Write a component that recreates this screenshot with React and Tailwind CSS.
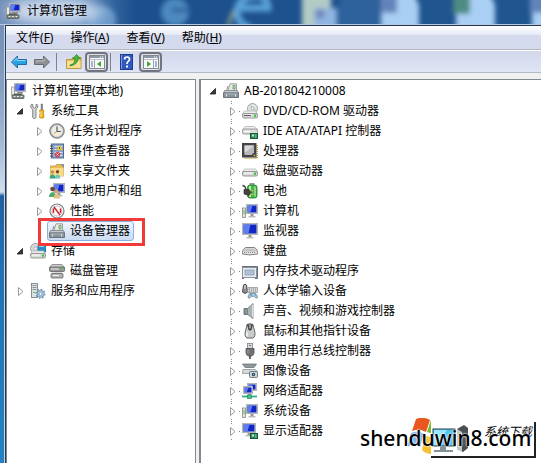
import React from "react";

function Svg({ children, className = "h-4 w-4" }) {
  return (
    <svg viewBox="0 0 16 16" className={`${className} shrink-0`} aria-hidden="true">
      {children}
    </svg>
  );
}

/* A monitor with a blue glossy screen, shared by several icons */
function Screen({ x = 3, y = 0, w = 12, h = 9, stand = true }) {
  return (
    <g>
      {stand && (
        <>
          <rect x={x + w / 2 - 1.5} y={y + h} width="3" height="2" fill="#9a9a96" />
          <rect x={x + w / 2 - 3.5} y={y + h + 2} width="7" height="1.4" fill="#b9b9b4" />
        </>
      )}
      <rect x={x + 0.5} y={y + 0.5} width={w - 1} height={h - 1} fill="#d5d7d4" stroke="#b3b6b4" />
      <rect x={x + 1.5} y={y + 1.5} width={w - 3} height={h - 3} fill="#1226c5" />
      <path d={`M${x + 1.5} ${y + 1.5}h${w / 2 - 1}l-2 ${h - 3}h-${w / 2 - 3}z`} fill="#5d7ff0" />
    </g>
  );
}

function Drive({ y = 8, light = true }) {
  return (
    <g>
      <path d={`M2.5 ${y}h11l2 3h-15z`} fill="#ededed" stroke="#b9b9b9" strokeWidth="0.8" />
      <rect x="0.5" y={y + 2.5} width="15" height="4.5" rx="1.5" fill="#dadada" stroke="#8c8c8c" strokeWidth="0.9" />
      <path d={`M2 ${y + 4}h8`} stroke="#fff" />
      {light && <rect x="12" y={y + 3.6} width="2" height="2.2" fill="#35c22d" />}
    </g>
  );
}

function Board() {
  return (
    <g>
      <rect x="8.5" y="10.5" width="7" height="5" fill="#2c8a5c" stroke="#155a3b" />
      <rect x="10" y="11.5" width="2" height="2" fill="#c8efd5" />
      <path d="M13 12h1.5M13 14h1.5" stroke="#8bd7a6" />
    </g>
  );
}

const icons = {
  management: (
    <Svg>
      <Screen x={3} y={0} w={12} h={9} stand={false} />
      <rect x="0.5" y="4" width="3" height="8" fill="#e9eae4" stroke="#8b8d88" strokeWidth="0.7" />
      <rect x="6" y="9" width="6" height="1.5" fill="#8e8f8b" />
      <path d="M3 10.5h8v1.5h-8z" fill="#5c5d5a" />
      <rect x="1" y="12" width="12" height="3.5" rx="0.5" fill="#7d8580" stroke="#565e59" strokeWidth="0.8" />
      <path d="M2.5 13.5h2M6 13.5h2M9.5 13.5h2" stroke="#e7e9e4" />
    </Svg>
  ),
  tools: (
    <Svg>
      <path d="M1.200 1.500c-1 1.700-.5 3.800 1.500 4.800v7.900c0 1.800 3.300 1.800 3.300 0V6.300c2-1 2.300-3.200 1.200-4.800h-1.200v2.500l-1.500 1l-1.700-1V1.500z" fill="#d3d5d5" stroke="#777a7b" strokeWidth="0.9" />
      <path d="M11.200 1h1.200v6h-1.200z" fill="#8d8f91" stroke="#595c5e" strokeWidth="0.6" />
      <path d="M9.500 7.500q2.200-1.400 4.500 0l-.7 2.200l.7 4.800q-2.200 1.600-4.500 0l.7-4.800z" fill="#f5b51c" stroke="#b77b08" strokeWidth="0.7" />
      <path d="M11 8.500v5.500" stroke="#ffe58a" />
    </Svg>
  ),
  clock: (
    <Svg>
      <circle cx="8" cy="8" r="7.300" fill="#9d9fa3" stroke="#707378" strokeWidth="0.800" />
      <circle cx="8" cy="8" r="5.700" fill="#f3edda" stroke="#d4d6db" />
      <path d="M8 3.500V8.500H12" fill="none" stroke="#3d5a87" strokeWidth="1.200" />
      <path d="M8 8.500l-3 2" stroke="#c89d52" />
    </Svg>
  ),
  events: (
    <Svg>
      <rect x="2.500" y="1" width="12" height="14" fill="#8aa3cc" stroke="#4e6894" />
      <path d="M5.500 3.500h8M5.500 6.500h8M5.500 9.500h8M5.500 12.500h8" stroke="#d5e0f3" />
      <path d="M1 3h3M1 5.500h3M1 8h3M1 10.500h3M1 13h3" stroke="#4d5056" />
      <path d="M10.500 2l3 5H7.500z" fill="#ffd93b" stroke="#c89f18" strokeWidth="0.500" />
      <path d="M10.500 4v2" stroke="#333" strokeWidth="0.800" />
      <circle cx="8.500" cy="11.500" r="2.600" fill="#d63c3c" />
      <path d="M7.500 10.500l2 2m0-2l-2 2" stroke="#fff" strokeWidth="0.800" />
    </Svg>
  ),
  shared: (
    <Svg>
      <path d="M1.500 3h5l1-1.500h7V13h-13z" fill="#e8bd55" stroke="#c29a40" strokeWidth="0.800" />
      <path d="M1.500 5h13v8h-13z" fill="#f8dc8b" />
      <path d="M12 2h2.500v2" stroke="#4b83cc" fill="none" />
      <circle cx="3.500" cy="9" r="1.700" fill="#c98756" />
      <path d="M.5 15.500c0-5.500 6-5.500 6 0z" fill="#37a67c" />
      <circle cx="8.500" cy="8.800" r="1.700" fill="#76462c" />
      <path d="M5.800 15.500c0-5.500 5.500-5.500 5.500 0z" fill="#7cc0b5" />
    </Svg>
  ),
  users: (
    <Svg>
      <Screen x={4} y={0} w={12} h={10} />
      <circle cx="3.500" cy="6" r="2.300" fill="#6f482e" />
      <path d="M0 14c0-6.500 7-6.500 7 0z" fill="#4eaa6c" />
      <circle cx="7.500" cy="8.500" r="2.100" fill="#d9a06b" />
      <path d="M4.500 15.500c0-6 6.500-6 6.500 0z" fill="#e3c083" />
    </Svg>
  ),
  performance: (
    <Svg>
      <circle cx="8" cy="8" r="7" fill="#f7f7f7" stroke="#808184" strokeWidth="1.200" />
      <circle cx="8" cy="8" r="5" fill="#fff" stroke="#b6b6b6" strokeWidth="0.800" />
      <path d="M5 4L11 12M4.500 10V5.500M11.500 10V5.500" stroke="#d81c26" strokeWidth="1.400" fill="none" />
    </Svg>
  ),
  devices: (
    <Svg>
      <path d="M7 .8h6.500V8H4.800z" fill="#e9eae7" stroke="#8a8d8a" strokeWidth="0.800" />
      <path d="M10 2.500h2V6h-2z" fill="#b2dcb0" stroke="#4e9a55" strokeWidth="0.700" />
      <path d="M5 3L3.500 8" stroke="#8a8d8a" />
      <path d="M1.500 7.500h13l1 2.500H.5z" fill="#c4cad0" stroke="#7b8288" strokeWidth="0.800" />
      <path d="M.5 10h15v4.500H.5z" fill="#87919a" stroke="#596067" strokeWidth="0.800" />
      <path d="M1.500 11h13" stroke="#c2cad1" strokeWidth="0.800" />
      <path d="M3.500 11.500v2M12.500 11.500v2" stroke="#e4e8eb" />
    </Svg>
  ),
  storage: (
    <Svg>
      <circle cx="5.500" cy="5.500" r="5" fill="#d8dbdd" stroke="#878b8f" strokeWidth="0.800" />
      <circle cx="5.500" cy="5.500" r="1.500" fill="#fff" stroke="#888" strokeWidth="0.600" />
      <path d="M8 2.500h8V9H8z" fill="#2790cb" stroke="#156896" strokeWidth="0.800" />
      <path d="M9 3.500h5" stroke="#86d2f4" />
      <Drive y={8} />
    </Svg>
  ),
  disks: (
    <Svg>
      <path d="M3 1.500h10l2.500 3H.5z" fill="#cdcdcd" stroke="#7d7d7d" strokeWidth="0.800" />
      <rect x="0.500" y="4" width="15" height="4.500" rx="1" fill="#989898" stroke="#5f5f5f" strokeWidth="0.800" />
      <path d="M3.500 9h9l1.500 2H2z" fill="#dadada" />
      <rect x="2" y="10.500" width="12" height="4.500" rx="1" fill="#b2b2b2" stroke="#666" strokeWidth="0.800" />
      <path d="M4 12.500h6M2 6h8" stroke="#f0f0f0" />
      <rect x="12" y="5" width="2" height="1.500" fill="#53c94a" />
    </Svg>
  ),
  services: (
    <Svg>
      <rect x="1.500" y="0.500" width="6" height="14" fill="#dde1e3" stroke="#7c8589" strokeWidth="0.900" />
      <path d="M2.500 2.500h4M2.500 4.500h4M2.500 6.500h4" stroke="#8b9498" />
      <path d="M3 9.500h2" stroke="#4fbf4c" />
      <circle cx="10.500" cy="10.800" r="3.500" fill="#a9c5df" stroke="#688eb2" strokeWidth="0.800" />
      <circle cx="10.500" cy="10.800" r="4.400" fill="none" stroke="#688eb2" strokeWidth="1.200" strokeDasharray="1.700 1.700" />
      <circle cx="10.500" cy="10.800" r="1.400" fill="#fff" stroke="#688eb2" strokeWidth="0.600" />
    </Svg>
  ),
  dvd: (
    <Svg>
      <circle cx="10.500" cy="5.500" r="5" fill="#e3e5e6" stroke="#8d9193" strokeWidth="0.800" />
      <path d="M10.500 5.500L8 1.500M10.500 5.500l4 2.500" stroke="#9bd2a8" />
      <circle cx="10.500" cy="5.500" r="1.500" fill="#fff" stroke="#8a8a8a" strokeWidth="0.700" />
      <Drive y={8} />
      <path d="M2 12.500h7" stroke="#5d5d5d" />
    </Svg>
  ),
  ide: (
    <Svg>
      <path d="M3 3.500h9.500l3 3H.5z" fill="#efefef" stroke="#b5b5b5" strokeWidth="0.800" />
      <rect x="0.500" y="6" width="15" height="5" rx="1.500" fill="#dcdcdc" stroke="#8e8e8e" strokeWidth="0.900" />
      <path d="M2 8.500h6" stroke="#fff" />
      <Board />
    </Svg>
  ),
  cpu: (
    <Svg>
      <path d="M15.200 2v13.200H2" fill="none" stroke="#c49a3c" strokeWidth="1.600" strokeDasharray="1 1" />
      <rect x="0" y="0" width="14.500" height="14.500" fill="#454547" />
      <path d="M2.500 2.500h9.500v7l-2.500 2.500h-7z" fill="#b7b9bb" />
      <path d="M2.500 2.500h9.500l-9.500 7.500z" fill="#d6d8d9" />
      <circle cx="12.500" cy="12.500" r="1" fill="#d2a33c" />
    </Svg>
  ),
  drive: (
    <Svg>
      <Drive y={6} />
    </Svg>
  ),
  battery: (
    <Svg>
      <rect x="8" y="0.500" width="4" height="2" fill="#b6b8ba" stroke="#6f7274" strokeWidth="0.600" />
      <rect x="5.500" y="2" width="9.500" height="13" rx="2.500" fill="#3fb844" stroke="#1d6f24" strokeWidth="0.800" />
      <path d="M8 3v11" stroke="#b2efa5" strokeWidth="2" />
      <path d="M13 3.500v10" stroke="#d4f3c8" />
      <path d="M.5 2.500q3 .5 3.500 4" fill="none" stroke="#3e3e3e" strokeWidth="1.300" />
      <path d="M2 6.500l5 0 2.500 2.500-2.500 3.500-5-1.500z" fill="#434341" stroke="#222" strokeWidth="0.600" />
      <path d="M8.500 8l3-.5M8.500 11l3 .5" stroke="#d9b755" strokeWidth="1.200" />
    </Svg>
  ),
  computer: (
    <Svg>
      <Screen x={4} y={1} w={12} h={10} />
      <rect x="0.500" y="5" width="3" height="9.500" fill="#e3e4df" stroke="#858884" strokeWidth="0.800" />
      <path d="M2 7v4" stroke="#49bd40" />
    </Svg>
  ),
  monitor: (
    <Svg>
      <Screen x={0} y={0} w={16} h={12} />
    </Svg>
  ),
  keyboard: (
    <Svg>
      <path d="M3.500 4.500h9q3 1.500 3 5v1.500q-7.500 1.800-15 0V9.500q0-3.500 3-5z" fill="#e4e4e4" stroke="#747474" strokeWidth="0.900" />
      <path d="M3.500 6.200h9.500M2.500 7.800h11M2 9.400h12" stroke="#858585" strokeWidth="1" strokeDasharray="1 1" />
    </Svg>
  ),
  memory: (
    <Svg>
      <path d="M0 3.500h15.500v12H13M0 15.500h2" fill="none" stroke="#5a5e64" strokeWidth="0.900" />
      <rect x="0.500" y="4.500" width="14" height="10" fill="#e4ebf4" stroke="#8791a0" />
      <rect x="3" y="7" width="9" height="5" fill="#b2c1d8" stroke="#8896a8" strokeWidth="0.700" />
    </Svg>
  ),
  hid: (
    <Svg>
      <path d="M1.500 2Q3 .5 4.500 2L5.500 9q-2.500 3-5 0z" fill="#8b8d8f" stroke="#3d3f41" strokeWidth="0.900" />
      <path d="M3 2v4" stroke="#eee" />
      <path d="M6 4.500h9.500v5H5.500z" fill="#d3d5d7" stroke="#8b8e91" strokeWidth="0.700" />
      <path d="M7 6h8M7 8h8" stroke="#85898c" strokeDasharray="1 1" />
      <path d="M7.500 10.500h6q2 2 2 4l-1.500.8-2-2h-2.500l-2 2-1.500-.8q0-2 1.500-4z" fill="#b2cadb" stroke="#577990" strokeWidth="0.700" />
      <path d="M8 12h2M13 12h1" stroke="#1d83b6" />
    </Svg>
  ),
  speaker: (
    <Svg>
      <path d="M2 5.500h3.500v6H2z" fill="#8a9599" stroke="#555e62" strokeWidth="0.800" />
      <path d="M5.500 5.500L11 .5v15l-5.500-4z" fill="#a9b3b6" stroke="#747f83" strokeWidth="0.800" />
      <path d="M10.500 2v12" stroke="#dce1e3" />
    </Svg>
  ),
  mouse: (
    <Svg>
      <path d="M5 1.500Q8 0 11 1.500q.5 3 1.500 6 1.500 6-1.500 7.500H5q-3-1.500-1.500-7.500Q4.500 4.500 5 1.500z" fill="#c9cbcd" stroke="#505254" strokeWidth="0.900" />
      <path d="M5.500 1.500L7 7h2l1.500-5.500" fill="#4b4d4f" stroke="#2f3133" strokeWidth="0.800" />
      <path d="M8 2v3.500" stroke="#eee" />
      <path d="M5 9v4.500" stroke="#f2f2f2" strokeWidth="1.500" />
    </Svg>
  ),
  usb: (
    <Svg>
      <rect x="5.500" y="0.500" width="5" height="5" fill="#d8d9da" stroke="#8a8c8e" strokeWidth="0.900" />
      <path d="M7 2.500h2" stroke="#77797b" />
      <path d="M4 5.500h8v4.500q0 2-2.500 3h-3Q4 12 4 10z" fill="#707275" stroke="#4d4f52" strokeWidth="0.800" />
      <path d="M6 6.500v4" stroke="#a2a4a6" />
      <path d="M8 13v3" stroke="#55575a" strokeWidth="1.800" />
    </Svg>
  ),
  imaging: (
    <Svg>
      <path d="M.5 1h14l-2.500 3.500H3z" fill="#8e999c" stroke="#5f6a6d" strokeWidth="0.700" />
      <path d="M1 6.500h12l2.500 2-3 2H.5z" fill="#d6dadb" stroke="#818a8d" strokeWidth="0.700" />
      <rect x="7.500" y="8.500" width="8" height="6" rx="1" fill="#cbd3d8" stroke="#56646d" strokeWidth="0.800" />
      <circle cx="11.500" cy="11.500" r="2.200" fill="#223c56" stroke="#fff" strokeWidth="0.700" />
      <circle cx="11.500" cy="11.500" r="0.800" fill="#7bbbe6" />
    </Svg>
  ),
  network: (
    <Svg>
      <Screen x={5} y={0} w={10} h={8} stand={false} />
      <Screen x={1} y={3} w={10} h={8} stand={false} />
      <path d="M6 11h3v2H6z" fill="#8f9591" />
      <path d="M0 13.500h15" stroke="#35ad79" strokeWidth="1.800" />
      <rect x="5.500" y="12" width="4" height="3.500" fill="#43c792" stroke="#248762" strokeWidth="0.700" />
    </Svg>
  ),
  display: (
    <Svg>
      <Screen x={0} y={0} w={14} h={10} />
      <Board />
    </Svg>
  ),
};
icons.system = icons.computer;

const leftTree = [
  { level: 0, icon: "management", text: "计算机管理(本地)" },
  { level: 1, icon: "tools", text: "系统工具", state: "open" },
  { level: 2, icon: "clock", text: "任务计划程序", state: "closed" },
  { level: 2, icon: "events", text: "事件查看器", state: "closed" },
  { level: 2, icon: "shared", text: "共享文件夹", state: "closed" },
  { level: 2, icon: "users", text: "本地用户和组", state: "closed" },
  { level: 2, icon: "performance", text: "性能", state: "closed" },
  { level: 2, icon: "devices", text: "设备管理器", selected: true },
  { level: 1, icon: "storage", text: "存储", state: "open" },
  { level: 2, icon: "disks", text: "磁盘管理" },
  { level: 1, icon: "services", text: "服务和应用程序", state: "closed" },
];

const deviceTree = [
  { level: 1, icon: "devices", text: "AB-201804210008", state: "open" },
  { level: 2, icon: "dvd", text: "DVD/CD-ROM 驱动器" },
  { level: 2, icon: "ide", text: "IDE ATA/ATAPI 控制器" },
  { level: 2, icon: "cpu", text: "处理器" },
  { level: 2, icon: "drive", text: "磁盘驱动器" },
  { level: 2, icon: "battery", text: "电池" },
  { level: 2, icon: "computer", text: "计算机" },
  { level: 2, icon: "monitor", text: "监视器" },
  { level: 2, icon: "keyboard", text: "键盘" },
  { level: 2, icon: "memory", text: "内存技术驱动程序" },
  { level: 2, icon: "hid", text: "人体学输入设备" },
  { level: 2, icon: "speaker", text: "声音、视频和游戏控制器" },
  { level: 2, icon: "mouse", text: "鼠标和其他指针设备" },
  { level: 2, icon: "usb", text: "通用串行总线控制器" },
  { level: 2, icon: "imaging", text: "图像设备" },
  { level: 2, icon: "network", text: "网络适配器" },
  { level: 2, icon: "system", text: "系统设备" },
  { level: 2, icon: "display", text: "显示适配器" },
].map((item) => ({ state: "closed", dotted: true, ...item }));

const indents = ["pl-[2px]", "pl-[2px]", "pl-[21px]"];

function Expander({ state, dotted, level }) {
  return (
    <svg viewBox="0 0 19 20" className="h-5 w-[19px] shrink-0" aria-hidden="true">
      {dotted && level === 2 && (
        <path d="M8 .5h1M8 2.500h1M8 18.500h1M16 10.500h1" stroke="#8c8c8c" shapeRendering="crispEdges" />
      )}
      {state === "open" && <path d="M11.500 7.500v5.500H6z" fill="#3b3b3b" stroke="#1c1c1c" strokeWidth="0.800" />}
      {state === "closed" && <path d="M7.500 6.500v8l4.500-4z" fill="#fff" stroke="#9a9a9a" />}
    </svg>
  );
}

function TreeItem({ item }) {
  const { level, icon, text, state, dotted, selected } = item;
  return (
    <li role="treeitem" aria-selected={!!selected} className={`flex h-5 items-center ${indents[level]}`}>
      {level > 0 && <Expander state={state} dotted={dotted} level={level} />}
      <button
        type="button"
        className={`relative -ml-0.5 flex h-5 items-center gap-[5px] whitespace-nowrap rounded-[3px] border px-px pr-[3px] text-xs/4 ${
          selected ? "border-[#8bb0dd] bg-linear-to-b from-[#f0f5fc] to-[#cbdcf4]" : "border-transparent"
        }`}
      >
        {icons[icon]}
        <span>{text}</span>
        {selected && (
          <span className="pointer-events-none absolute -top-1 -right-3 -bottom-1.5 -left-2.5 z-10 border-3 border-[#f33a3a]" />
        )}
      </button>
    </li>
  );
}

function PaneIcon({ flipped }) {
  return (
    <svg viewBox="0 0 18 16" className="h-4 w-[18px]" aria-hidden="true">
      <rect x="1.500" y="1.500" width="15" height="13" fill="#fafafa" stroke="#83878e" />
      <path d="M2 3h14" stroke="#8e97a6" strokeWidth="2" />
      <path d="M12 3h1M14 3h1" stroke="#fff" />
      <path d="M2 5.500h14" stroke="#b9bec7" />
      {flipped ? (
        <>
          <path d="M11.500 6v8.500" stroke="#9aa0aa" />
          <path d="M13 8h2M13 10h2M13 12h2" stroke="#4771ad" />
          <path d="M5 7v6l4-3z" fill="#35ac2f" />
        </>
      ) : (
        <>
          <path d="M6.500 6v8.500" stroke="#9aa0aa" />
          <path d="M3 8h2M3 10h2M3 12h2" stroke="#4771ad" />
          <path d="M13 7v6l-4-3z" fill="#35ac2f" />
        </>
      )}
    </svg>
  );
}

function ArrowIcon({ forward }) {
  return forward ? (
    <Svg>
      <path d="M15.500 8L9.500 2v3.500h-9v5h9V14z" fill="#8f9195" stroke="#696b70" strokeLinejoin="round" />
      <path d="M1.500 7h8.500V4.500" fill="none" stroke="#bcbdbf" />
    </Svg>
  ) : (
    <Svg>
      <path d="M.5 8l6-6v3.500h9v5h-9V14z" fill="#29a3e2" stroke="#1f6ba5" strokeLinejoin="round" />
      <path d="M2.500 7.500L6 4v2.500h8.500" fill="none" stroke="#83d7fa" />
    </Svg>
  );
}

const menus = [
  ["文件", "F"],
  ["操作", "A"],
  ["查看", "V"],
  ["帮助", "H"],
];

const pressed =
  "flex h-5 w-[23px] items-center justify-center rounded-[4px] border-2 border-[#70757f] bg-[#dfe2e9]";

function Separator() {
  return <span className="h-[18px] w-px bg-[#80838c]" />;
}

/* Blurred desktop that shows through the glass title bar */
function Glass() {
  return (
    <svg
      viewBox="0 0 541 25"
      preserveAspectRatio="xMinYMin slice"
      className="absolute inset-0 h-full w-full"
      aria-hidden="true"
    >
      <defs>
        <filter id="soft" x="-30%" y="-60%" width="160%" height="220%">
          <feGaussianBlur stdDeviation="2.800" />
        </filter>
        <filter id="glow" x="-30%" y="-120%" width="160%" height="340%">
          <feGaussianBlur stdDeviation="7" />
        </filter>
        <linearGradient id="sky" x1="0" x2="1">
          <stop offset="0" stopColor="#6f8db8" />
          <stop offset="0.150" stopColor="#5583b8" />
          <stop offset="0.250" stopColor="#1c4f8d" />
          <stop offset="1" stopColor="#20568f" />
        </linearGradient>
      </defs>
      <rect width="541" height="25" fill="url(#sky)" />
      <g filter="url(#soft)">
        <circle cx="102" cy="20" r="14" fill="#7dadd9" opacity="0.700" />
        <circle cx="175" cy="12" r="14" fill="#4e89bf" />
        <rect x="172" y="8" width="16" height="4" fill="#2b6299" />
        <path d="M228 27Q233 5 247-2" fill="none" stroke="#b9bb76" strokeWidth="3" opacity="0.800" />
        <path d="M237 8h31q-1-14-15-12-16 3-16 17 1 12 14 15" fill="none" stroke="#5aa2d8" strokeWidth="7" />
        <rect x="302" y="-8" width="29" height="40" fill="#b3cbc5" />
        <rect x="314" y="8" width="23" height="24" fill="#8fb5e0" />
        <circle cx="320" cy="14" r="5" fill="#7588ba" />
        <rect x="340" y="-8" width="38" height="40" fill="#2d629d" />
        <path d="M381-8h32l6 13v28h-38z" fill="#a9cff4" />
        <rect x="380" y="-5" width="17" height="18" fill="#6484bb" />
        <path d="M456-8h33l6 13v28h-39z" fill="#a9cff4" />
        <rect x="453" y="-5" width="17" height="19" fill="#4d8b82" />
        <path d="M532-8h18v40h-18z" fill="#a9cff4" />
        <rect x="530" y="-5" width="17" height="18" fill="#6484bb" />
      </g>
      <ellipse cx="54" cy="11" rx="48" ry="14" fill="#cfdcef" filter="url(#glow)" />
      <path d="M0 24.500h541" stroke="#b8c8dc" />
    </svg>
  );
}

function Watermark() {
  return (
    <div className="absolute right-[5px] bottom-[5px] h-10 w-[176px]">
      <div className="absolute right-0 bottom-0 h-9 w-[105px] border-r-2 border-b-2 border-[#222] bg-white" />
      <svg viewBox="0 0 80 40" className="absolute top-0 left-12 h-10 w-20" aria-hidden="true">
        <path d="M8 1q7-3 14 1l-4 12q-7-4-14-1z" fill="#e9571f" />
        <path d="M23 2h0v13q-2 0-4-1z" fill="#79b82c" />
        <path d="M3 15q7-3 13 1l-4 13q-7-4-13 0z" fill="#7eb1ea" />
        <path d="M17 17q3 2 6 2v17q-5 0-9-4z" fill="#f5c232" />
        <rect x="25" y="11" width="22" height="17" fill="#50c5ef" stroke="#263e4b" />
        <path d="M26 12h13l-10 15h-3z" fill="#98e7ff" />
        <path d="M32 28h6v4h7v2H26v-2h6z" fill="#839199" />
        <path d="M49 11l7-4 4 3v20l-5 4-6-3z" fill="#4a4f53" />
        <path d="M49 11l5 3v20l-5-3z" fill="#c3c7ca" />
      </svg>
      <span className="absolute top-1.5 right-1 text-xs/4 italic whitespace-nowrap">系统下载</span>
      <span className="absolute top-1.5 left-0 text-[21px]/7 font-medium whitespace-nowrap text-black [text-shadow:0_0_2px_#fff,0_0_2px_#fff]">
        shenduwin8.com
      </span>
    </div>
  );
}

export default function App() {
  return (
    <div className="relative flex min-h-screen flex-col overflow-hidden bg-[linear-gradient(180deg,#6f8db8_0px,#8099bb_70px,#a2b7d2_140px,#d2dfed_192px,#235f9e_196px,#2270b4_260px,#2482c2_463px)] font-['Noto_Sans','Noto_Sans_CJK_SC',sans-serif] text-xs text-black">
      <header className="relative flex h-[25px] items-center gap-[5px] overflow-hidden pb-1 pl-1.5">
        <Glass />
        <span className="relative">{icons.management}</span>
        <h1 className="relative text-xs/4">计算机管理</h1>
      </header>

      <div className="ml-1 flex flex-1 flex-col border-l border-[#c4d4e6]">
        <div className="flex flex-1 flex-col border-t border-l border-[#203a5c] bg-[#f0f0f0]">
          <nav className="flex h-6 items-center gap-px border-b border-[#b4b6bb] bg-[linear-gradient(180deg,#fff_0px,#e4e9f5_9px,#d4daec_9px,#d5dbee_100%)] pl-0.5">
            {menus.map(([name, key]) => (
              <button key={key} type="button" className="px-2 text-xs/4">
                {name}(<u>{key}</u>)
              </button>
            ))}
          </nav>
          <div
            role="toolbar"
            className="flex h-[23px] items-center border-t border-b border-t-white border-b-[#b1b9c9] bg-linear-to-b from-[#d2d8eb] to-[#e0e5f5] pl-[5px]"
          >
            <button type="button" aria-label="后退"><ArrowIcon /></button>
            <button type="button" aria-label="前进" className="ml-[7px]"><ArrowIcon forward /></button>
            <span className="ml-1.5 flex"><Separator /></span>
            <button type="button" aria-label="上一级" className="ml-[9px]">
              <Svg>
                <path d="M.5 5.500h5l1-2h8.500v11H.5z" fill="#e8c464" stroke="#c0963a" />
                <path d="M1 7h13.500v7H1z" fill="#f9df91" />
                <path d="M4 11q5-1 5-6H6.500L10.500.5l4 4H12q0 6-8 7.500z" fill="#48b53c" stroke="#26832a" strokeWidth="0.700" />
              </Svg>
            </button>
            <button type="button" aria-label="显示控制台树" className={`ml-[3px] ${pressed}`}><PaneIcon /></button>
            <span className="ml-0.5 flex"><Separator /></span>
            <button type="button" aria-label="帮助" className="ml-[9px]">
              <svg viewBox="0 0 13 16" className="h-4 w-[13px]" aria-hidden="true">
                <rect x="0.500" y="0.500" width="12" height="15" fill="#3159bd" stroke="#1f3b8e" />
                <path d="M1.500 1v14" stroke="#7c9ae2" />
                <path d="M4.500 5.500q0-2.500 2.500-2.500t2.500 2.200q0 1.300-1.300 2.200T7 10" fill="none" stroke="#fff" strokeWidth="1.700" />
                <rect x="6" y="11.500" width="2" height="2" fill="#fff" />
              </svg>
            </button>
            <button type="button" aria-label="显示操作窗格" className={`ml-1.5 ${pressed}`}><PaneIcon flipped /></button>
          </div>

          <main className="flex flex-1 gap-[3px] pt-1.5">
            <ul role="tree" aria-label="控制台树" className="w-[190px] shrink-0 border border-b-0 border-[#828790] bg-white pt-px pl-0.5">
              {leftTree.map((item) => (
                <TreeItem key={item.text} item={item} />
              ))}
            </ul>
            <ul role="tree" aria-label="设备" className="min-w-0 flex-1 border-t border-l-2 border-[#828790] bg-white pt-px pl-px">
              {deviceTree.map((item) => (
                <TreeItem key={item.text} item={item} />
              ))}
            </ul>
          </main>
        </div>
      </div>
      <Watermark />
    </div>
  );
}
